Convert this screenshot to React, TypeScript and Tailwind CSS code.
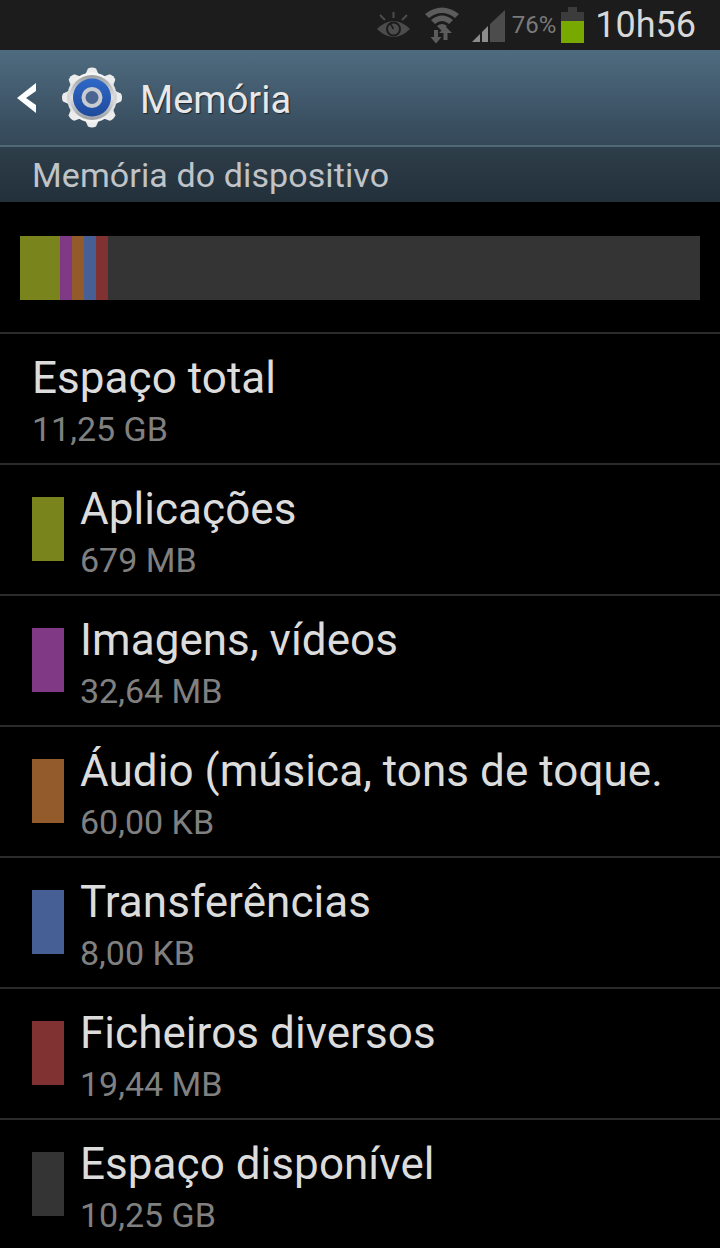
const rows = [
  { name: "Aplicações", size: "679 MB", color: "bg-[#7a841c]" },
  { name: "Imagens, vídeos", size: "32,64 MB", color: "bg-[#803a85]" },
  { name: "Áudio (música, tons de toque.", size: "60,00 KB", color: "bg-[#935a2b]" },
  { name: "Transferências", size: "8,00 KB", color: "bg-[#466096]" },
  { name: "Ficheiros diversos", size: "19,44 MB", color: "bg-[#803232]" },
  { name: "Espaço disponível", size: "10,25 GB", color: "bg-[#343434]" },
];

function EyeIcon() {
  return (
    <svg width="33" height="27" viewBox="0 0 33 27" className="mr-[15px] mt-[1px]">
      <path d="M0 17 Q16.5 1 33 17 Q16.5 33 0 17Z" fill="#4c4c4c" />
      <circle cx="16.5" cy="17" r="7.5" fill="#1c1c1c" />
      <circle cx="16.5" cy="17" r="5.5" fill="#4c4c4c" />
      <path d="M16.5 17 L13 11" stroke="#1c1c1c" strokeWidth="1.5" />
      <path d="M16.5 0 V6 M3 3 L8 8 M30 3 L25 8" stroke="#4c4c4c" strokeWidth="2" />
    </svg>
  );
}

function WifiIcon() {
  return (
    <svg width="34" height="37" viewBox="0 0 34 37" className="mr-[13px] mt-[1px]">
      <path d="M0 7 Q17 -6 34 7 L30 11 Q17 1 4 11Z" fill="#5c5c5c" />
      <path d="M6 13 Q17 4 28 13 L24 17 Q17 11 10 17Z" fill="#5c5c5c" />
      <path d="M12 19 Q17 15 22 19 L17 24Z" fill="#5c5c5c" />
      <path d="M18.5 33 V26 H14 L20.5 19.5 L27 26 H22.5 V33Z" fill="#5c5c5c" />
      <path d="M9 23 V30 H5.5 L11 36.5 L16.5 30 H13 V23Z" fill="#5c5c5c" />
    </svg>
  );
}

function SignalIcon() {
  return (
    <svg width="33" height="32" viewBox="0 0 33 32" className="mr-[7px] mt-[2px]">
      <path d="M0 32 L8 24 V32Z" fill="#8c8c8c" />
      <path d="M10 22 L16 16 V32 H10Z" fill="#8c8c8c" />
      <path d="M18 14 L33 0 V32 H18Z" fill="#4c4c4c" />
    </svg>
  );
}

function GearIcon() {
  const teeth = [0, 45, 90, 135, 180, 225, 270, 315];
  return (
    <svg width="60" height="61" viewBox="0 0 60 60">
      <defs>
        <linearGradient id="steel" x1="0" y1="0" x2="0" y2="1">
          <stop offset="0" stopColor="#9a9ea2" />
          <stop offset="0.5" stopColor="#dcdee0" />
          <stop offset="1" stopColor="#9a9ea2" />
        </linearGradient>
        <linearGradient id="body" x1="0" y1="0" x2="0" y2="1">
          <stop offset="0" stopColor="#f8f8f8" />
          <stop offset="0.5" stopColor="#d0d2d4" />
          <stop offset="1" stopColor="#f6f6f6" />
        </linearGradient>
        <linearGradient id="blue" x1="0" y1="0" x2="0" y2="1">
          <stop offset="0" stopColor="#2f68c8" />
          <stop offset="1" stopColor="#1f4a9c" />
        </linearGradient>
      </defs>
      {teeth.map((a) => (
        <path key={a} d="M26 1 Q30 -1 34 1 L38 10 H22Z" fill="#ececec" transform={`rotate(${a} 30 30)`} />
      ))}
      <circle cx="30" cy="30" r="25" fill="url(#body)" />
      <circle cx="30" cy="30" r="22.5" fill="url(#steel)" />
      <circle cx="30" cy="30" r="19" fill="url(#blue)" />
      <circle cx="30" cy="30" r="10.5" fill="#c8ccd0" />
      <circle cx="30" cy="30" r="6.5" fill="#4c6490" />
    </svg>
  );
}

function Row({ name, size, color }: { name: string; size: string; color?: string }) {
  return (
    <div className="flex h-[131px] items-center border-t-2 border-[#2b2b2b] pl-[32px]">
      {color && <div className={`mb-[2px] mr-[16px] h-[64px] w-[32px] ${color}`} />}
      <div className="pt-[10px]">
        <div className="text-[44px] leading-[50px] tracking-[0.05px] text-[#dcdcdc]">{name}</div>
        <div className="text-[34px] leading-[52px] text-[#808080]">{size}</div>
      </div>
    </div>
  );
}

export default function App() {
  return (
    <div className="h-[1248px] w-[720px] overflow-hidden bg-black font-['Roboto',sans-serif]">
      <div className="flex h-[50px] items-center justify-end bg-[#1c1c1c] pr-[24px]">
        <EyeIcon />
        <WifiIcon />
        <SignalIcon />
        <span className="mr-[5px] text-[24px] text-[#7a7a7a]">76%</span>
        <div className="mr-[11px] flex h-[36px] w-[23px] flex-col items-center">
          <div className="h-[5px] w-[9px] bg-[#3c3c3c]" />
          <div className="h-[9px] w-full bg-[#3c3c3c]" />
          <div className="w-full flex-1 bg-[#78a900]" />
        </div>
        <span className="text-[36px] text-[#d8d8d8]">10h56</span>
      </div>

      <div className="flex h-[95px] items-center bg-gradient-to-b from-[#4f6b80] to-[#344858] pl-[17px]">
        <svg width="20" height="30" viewBox="0 0 20 30" className="mr-[25px]">
          <path d="M19 0 V8 L9 15 L19 22 V30 L0 15Z" fill="#ffffff" />
        </svg>
        <GearIcon />
        <span className="ml-[18px] mt-[6px] text-[38px] text-[#e8e8e8] [text-shadow:1px_1px_1px_#1a2630]">Memória</span>
      </div>

      <div className="flex h-[57px] items-center border-t-2 border-[#506878] bg-gradient-to-b from-[#2e3e4a] to-[#22303a] pl-[32px] pt-[2px]">
        <span className="text-[34px] tracking-[0.1px] text-[#c0c4c8]">Memória do dispositivo</span>
      </div>

      <div className="h-[130px] px-[20px] pt-[34px]">
        <div className="flex h-[64px] bg-[#343434]">
          <div className="w-[40px] bg-[#7a841c]" />
          <div className="w-[12px] bg-[#803a85]" />
          <div className="w-[12px] bg-[#935a2b]" />
          <div className="w-[12px] bg-[#466096]" />
          <div className="w-[12px] bg-[#803232]" />
        </div>
      </div>

      <Row name="Espaço total" size="11,25 GB" />
      {rows.map((r) => (
        <Row key={r.name} {...r} />
      ))}
    </div>
  );
}
